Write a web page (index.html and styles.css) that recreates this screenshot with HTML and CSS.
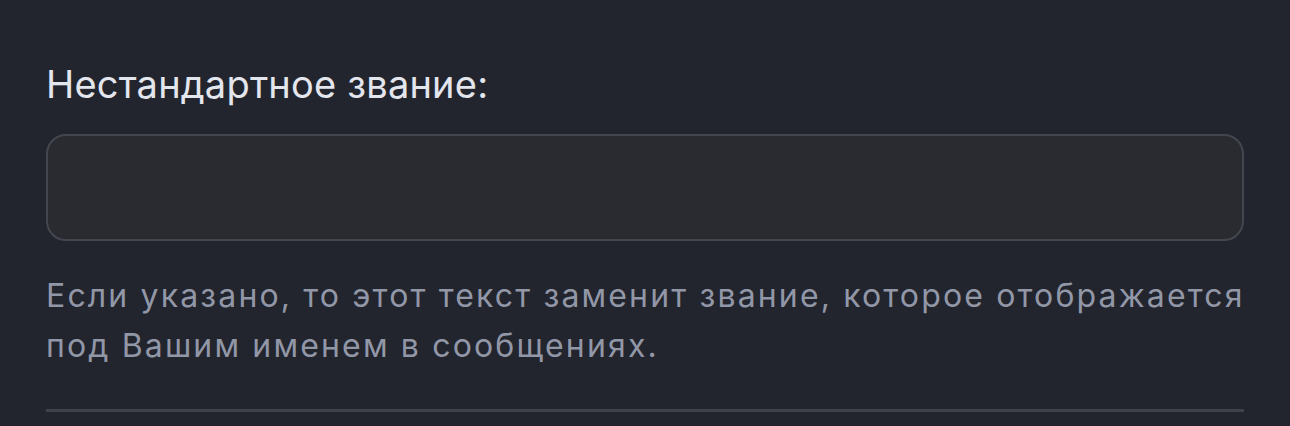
FILE: index.html
```html
<!DOCTYPE html>
<html lang="ru">
<head>
<meta charset="utf-8">
<link rel="stylesheet" href="styles.css">
</head>
<body>
<div class="field">
  <label class="field-label" for="title">Нестандартное звание:</label>
  <input class="field-input" id="title" type="text">
  <p class="field-hint">Если указано, то этот текст заменит звание, которое отображается под Вашим именем в сообщениях.</p>
  <div class="divider"></div>
</div>
</body>
</html>
```
FILE: styles.css
```css
html, body {
  margin: 0;
  padding: 0;
  background: #22252d;
}
.field {
  padding: 60px 46px 0;
  display: flex;
  flex-direction: column;
}
.field-label {
  font-family: Inter, "Noto Sans", sans-serif;
  font-size: 38px;
  line-height: 48px;
  color: #e4e6ee;
  letter-spacing: 0.2px;
}
.field-input {
  margin: 26px 0 0;
  box-sizing: border-box;
  height: 107px;
  width: 100%;
  background: #2a2b30;
  border: 2px solid #44464f;
  border-radius: 20px;
  outline: none;
}
.field-hint {
  margin: 30px -24px 0 0;
  font-family: Inter, "Noto Sans", sans-serif;
  font-size: 32px;
  line-height: 50px;
  letter-spacing: 2.15px;
  color: #9297a8;
}
.divider {
  margin-top: 38px;
  height: 3px;
  background: #3f424b;
}
```
